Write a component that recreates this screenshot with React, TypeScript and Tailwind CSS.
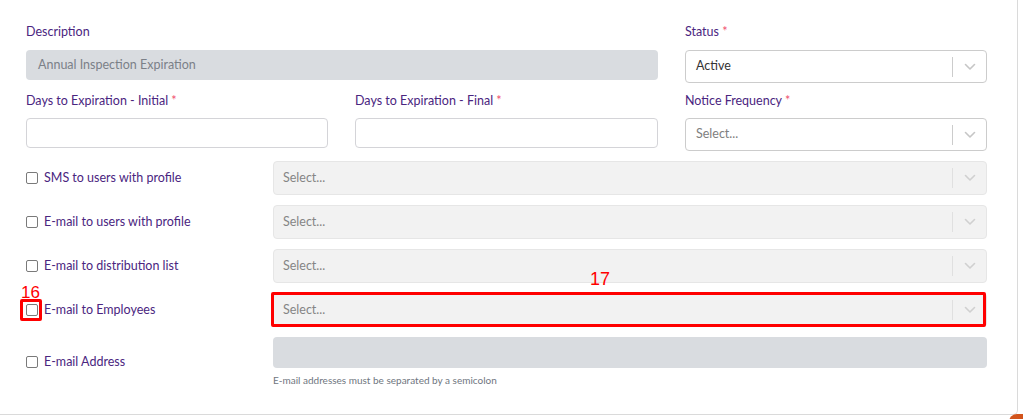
import React from "react";

const font = { fontFamily: '"Lato", "Open Sans", sans-serif' };

function Chevron({ color }: { color: string }) {
  return (
    <svg width="12" height="8" viewBox="0 0 12 8" fill="none">
      <path d="M1.5 1.5 L6 6 L10.5 1.5" stroke={color} strokeWidth="1.6" strokeLinecap="round" strokeLinejoin="round" />
    </svg>
  );
}

function Label({ text, required }: { text: string; required?: boolean }) {
  return (
    <div className="h-[18px] leading-[18px] text-[12.5px] text-[#4a2580]">
      {text}
      {required && <span className="text-[#f0506e]"> *</span>}
    </div>
  );
}

function ActiveSelect({ value, placeholder }: { value?: string; placeholder?: string }) {
  return (
    <div className="flex h-[33px] items-center rounded-[4px] border border-[#cccccc] bg-white">
      <div className={"flex-1 pl-[10px] text-[12.5px] " + (value ? "text-[#333333]" : "text-[#808080]")}>
        {value ?? placeholder}
      </div>
      <div className="h-[20px] w-px bg-[#cccccc]" />
      <div className="flex w-[33px] items-center justify-center">
        <Chevron color="#c6c6c6" />
      </div>
    </div>
  );
}

function DisabledSelect() {
  return (
    <div className="flex h-[34px] flex-1 items-center rounded-[4px] border border-[#e6e6e6] bg-[#f2f2f2]">
      <div className="flex-1 pl-[9px] text-[12.5px] text-[#858585]">Select...</div>
      <div className="h-[20px] w-px bg-[#e0e0e0]" />
      <div className="flex w-[33px] items-center justify-center">
        <Chevron color="#d0d0d0" />
      </div>
    </div>
  );
}

function CheckLabel({ text }: { text: string }) {
  return (
    <div className="flex w-[247px] shrink-0 items-center gap-[6px]">
      <div className="h-[12px] w-[12px] rounded-[2px] border-[1.5px] border-[#7a7a7a] bg-white" />
      <span className="text-[12.5px] text-[#4a2580]">{text}</span>
    </div>
  );
}

export default function App() {
  return (
    <div className="relative h-[419px] w-[1023px] overflow-hidden bg-white" style={font}>
      <div className="h-[415px] w-[1018px] rounded-br-[5px] border-r border-b border-[#dadada] pl-[26px] pt-[23px]">
        <div className="grid grid-cols-[302px_303px_302px] gap-x-[27px] gap-y-[9px]">
          <div className="col-span-2 flex flex-col gap-[9px]">
            <Label text="Description" />
            <div className="flex h-[30px] items-center rounded-[4px] bg-[#d9dce0] pl-[12px] text-[12.5px] text-[#7b8088]">
              Annual Inspection Expiration
            </div>
          </div>
          <div className="flex flex-col gap-[9px]">
            <Label text="Status" required />
            <ActiveSelect value="Active" />
          </div>
          <div className="flex flex-col gap-[8px]">
            <Label text="Days to Expiration - Initial" required />
            <div className="h-[30px] rounded-[4px] border border-[#d4d4d8] bg-white" />
          </div>
          <div className="flex flex-col gap-[8px]">
            <Label text="Days to Expiration - Final" required />
            <div className="h-[30px] rounded-[4px] border border-[#d4d4d8] bg-white" />
          </div>
          <div className="flex flex-col gap-[8px]">
            <Label text="Notice Frequency" required />
            <ActiveSelect placeholder="Select..." />
          </div>
        </div>

        <div className="mt-[10px] flex w-[961px] flex-col gap-[10px]">
          <div className="flex items-center">
            <CheckLabel text="SMS to users with profile" />
            <DisabledSelect />
          </div>
          <div className="flex items-center">
            <CheckLabel text="E-mail to users with profile" />
            <DisabledSelect />
          </div>
          <div className="flex items-center">
            <CheckLabel text="E-mail to distribution list" />
            <DisabledSelect />
          </div>
          <div className="flex items-center">
            <CheckLabel text="E-mail to Employees" />
            <DisabledSelect />
          </div>
          <div className="flex items-center">
            <CheckLabel text="E-mail Address" />
            <div className="flex flex-1 flex-col">
              <div className="h-[31px] rounded-[4px] bg-[#d9dce0]" />
              <div className="mt-[5px] text-[10px] leading-[14px] text-[#6f7680]">
                E-mail addresses must be separated by a semicolon
              </div>
            </div>
          </div>
        </div>
      </div>

      {/* orange element peeking at bottom right */}
      <div className="absolute left-[1009px] top-[414px] h-[10px] w-[30px] rounded-tl-[8px] bg-[#d2541c]" />

      {/* annotations */}
      <div
        className="absolute left-[21px] top-[284px] text-[17px] leading-[17px] text-[#ff0000]"
        style={{ fontFamily: '"Liberation Sans", sans-serif' }}
      >
        16
      </div>
      <div className="absolute left-[20px] top-[299px] h-[22px] w-[22px] rounded-[2px] border-[3px] border-[#ff0000]" />
      <div
        className="absolute left-[590px] top-[270px] text-[18px] leading-[18px] text-[#ff0000]"
        style={{ fontFamily: '"Liberation Sans", sans-serif' }}
      >
        17
      </div>
      <div className="absolute left-[271px] top-[292px] h-[35px] w-[715px] rounded-[2px] border-[3px] border-[#ff0000]" />
    </div>
  );
}
